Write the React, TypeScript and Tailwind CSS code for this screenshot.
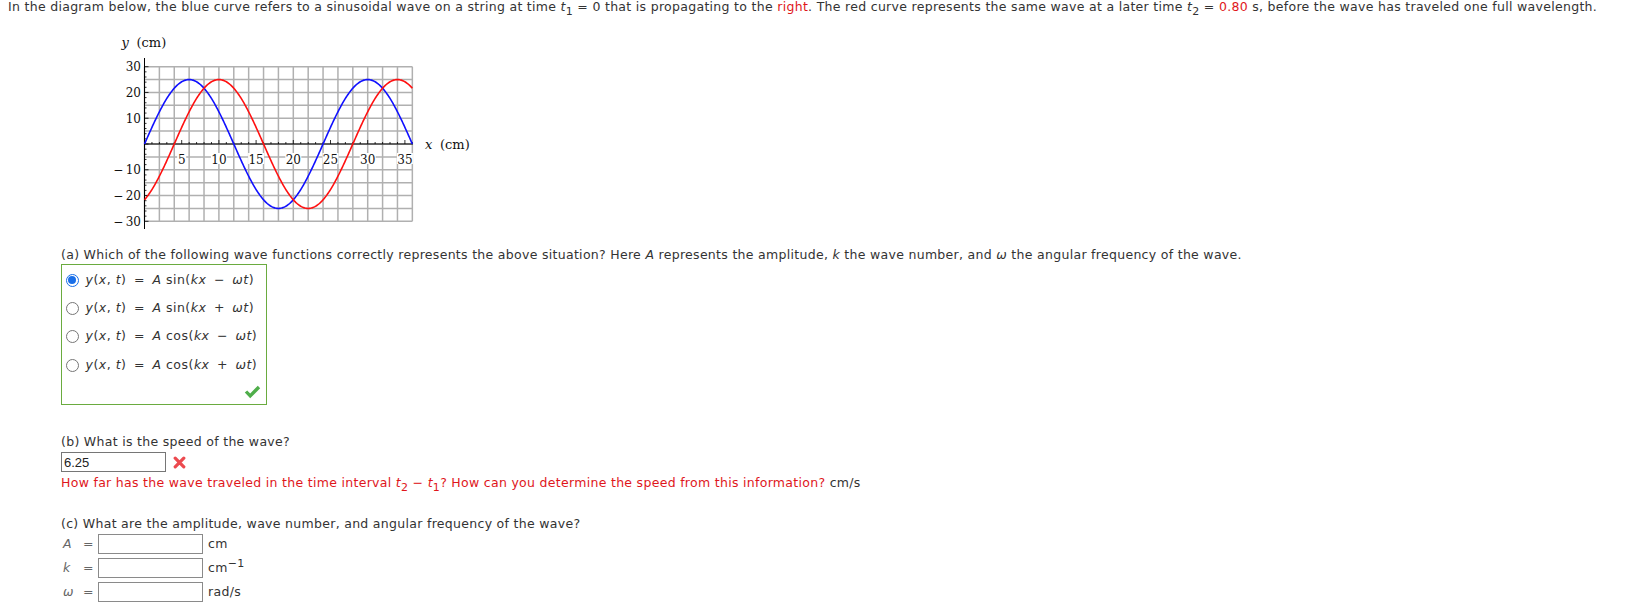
import React from "react";

const X = (u: number) => 144.5 + u * 7.44;
const Y = (v: number) => 143 - v * 2.577;

const wavePoints = (shift: number) => {
  const pts: string[] = [];
  for (let i = 0; i <= 360; i++) {
    const u = i / 10;
    const v = 25 * Math.sin((2 * Math.PI * (u - shift)) / 24);
    pts.push(`${X(u).toFixed(2)},${Y(v).toFixed(2)}`);
  }
  return pts.join(" ");
};

const WaveGraph = () => {
  const cols = Array.from({ length: 19 }, (_, i) => i * 2);
  const rows = Array.from({ length: 13 }, (_, i) => -30 + i * 5);
  const xLabels = [5, 10, 15, 20, 25, 30, 35];
  const yLabels = [30, 20, 10, -10, -20, -30];
  const xTicks = Array.from({ length: 36 }, (_, i) => i + 1);
  const yTicks = Array.from({ length: 31 }, (_, i) => -30 + i * 2);

  return (
    <svg width={380} height={200} viewBox="100 30 380 200" className="ml-[92px] mt-[17px] block tracking-normal">
      {cols.map((u) => (
        <line key={"c" + u} x1={X(u)} x2={X(u)} y1={Y(30)} y2={Y(-30)} stroke="#b0b0b0" strokeWidth={1.5} />
      ))}
      {rows.map((v) => (
        <line key={"r" + v} x1={X(0)} x2={X(36)} y1={Y(v)} y2={Y(v)} stroke="#b0b0b0" strokeWidth={1.5} />
      ))}

      {/* axes */}
      <line x1={144.5} x2={144.5} y1={57} y2={228} stroke="#000" strokeWidth={1} />
      <line x1={144.5} x2={413} y1={143} y2={143} stroke="#000" strokeWidth={1} />
      {yTicks.map((v) => (
        <line key={"yt" + v} x1={144.5} x2={v % 10 === 0 ? 148.5 : 146.5} y1={Y(v)} y2={Y(v)} stroke="#000" strokeWidth={0.8} />
      ))}
      {xTicks.map((u) => (
        <line key={"xt" + u} x1={X(u)} x2={X(u)} y1={143} y2={u % 5 === 0 ? 139 : 141} stroke="#000" strokeWidth={0.8} />
      ))}

      {/* waves */}
      <polyline points={wavePoints(0)} fill="none" stroke="#1010ff" strokeWidth={1.6} />
      <polyline points={wavePoints(4)} fill="none" stroke="#ff1010" strokeWidth={1.6} />

      {/* labels */}
      <g fontFamily="DejaVu Serif, serif" fontSize={12} fill="#111">
        {xLabels.map((u) => (
          <g key={"xl" + u}>
            <rect x={X(u) - (u < 10 ? 4.5 : 8)} y={152} width={u < 10 ? 9 : 16} height={11} fill="#fff" />
            <text x={X(u)} y={162.5} textAnchor="middle">
              {u}
            </text>
          </g>
        ))}
        {yLabels.map((v) => (
          <text key={"yl" + v} x={141} y={Y(v) + 4.3} textAnchor="end">
            {v < 0 ? `\u2212\u2009${-v}` : v}
          </text>
        ))}
      </g>
      <g fontFamily="DejaVu Serif, serif" fontSize={13} fill="#111">
        <text x={121.5} y={45.5} fontStyle="italic">y</text>
        <text x={136.5} y={45.5}>(cm)</text>
        <text x={425} y={147.5} fontStyle="italic">x</text>
        <text x={440} y={147.5}>(cm)</text>
      </g>
    </svg>
  );
};

const Sub = ({ children }: { children: React.ReactNode }) => (
  <span className="relative top-[4px] text-[11px]">{children}</span>
);

const Radio = ({ checked }: { checked?: boolean }) =>
  checked ? (
    <span className="flex h-[13px] w-[13px] shrink-0 items-center justify-center rounded-full border-[1.5px] border-[#1a6fe8] bg-white">
      <span className="h-[8px] w-[8px] rounded-full bg-[#1a6fe8]" />
    </span>
  ) : (
    <span className="h-[13px] w-[13px] shrink-0 rounded-full border border-[#767676] bg-white" />
  );

const Formula = ({ fn, op }: { fn: string; op: string }) => (
  <span className="tracking-[0.5px]">
    <i>y</i>(<i>x</i>, <i>t</i>) <span className="mx-[3px]">=</span> <i>A</i> {fn}(<i>kx</i>{" "}
    <span className="mx-[3px]">{op}</span> <i>ωt</i>)
  </span>
);

const options = [
  { fn: "sin", op: "\u2212", checked: true },
  { fn: "sin", op: "+" },
  { fn: "cos", op: "\u2212" },
  { fn: "cos", op: "+" },
];

const InputRow = ({ label, unit }: { label: React.ReactNode; unit: React.ReactNode }) => (
  <div className="flex h-[24px] items-center">
    <span className="w-[22px] pl-[2px] italic text-[#666]">{label}</span>
    <span className="w-[14.5px] text-[#666]">=</span>
    <span className="h-[20px] w-[105px] border border-[#8a8a8a] bg-white" />
    <span className="ml-[5.5px]">{unit}</span>
  </div>
);

export default function App() {
  return (
    <div className="min-h-[607px] bg-white pl-[8px] font-['DejaVu_Sans',Verdana,sans-serif] text-[12.5px] tracking-[0.3px] text-[#333]">
      <p className="whitespace-nowrap pt-[1px] leading-[12px]">
        In the diagram below, the blue curve refers to a sinusoidal wave on a string at time <i>t</i>
        <Sub>1</Sub> = 0 that is propagating to the <span className="text-[#e0161b]">right</span>. The red curve
        represents the same wave at a later time <i>t</i>
        <Sub>2</Sub> = <span className="text-[#e0161b]">0.80</span> s, before the wave has traveled one full wavelength.
      </p>

      <WaveGraph />

      <div className="pl-[53px]">
        <p className="mt-[16px] whitespace-nowrap leading-[16px]">
          (a) Which of the following wave functions correctly represents the above situation? Here <i>A</i> represents
          the amplitude, <i>k</i> the wave number, and <i>ω</i> the angular frequency of the wave.
        </p>
        <div className="mt-[1px] w-[206px] border border-[#6aab3f] pt-[1px]">
          {options.map((o, i) => (
            <div key={i} className="flex h-[28.33px] items-center gap-[7px] pl-[3.5px]">
              <Radio checked={o.checked} />
              <Formula fn={o.fn} op={o.op} />
            </div>
          ))}
          <div className="flex h-[25px] items-center justify-end pr-[5px]">
            <svg width="17" height="14" viewBox="0 0 17 14">
              <path d="M0.8 7.6 L3.2 5.4 L6.2 8.4 L13.8 0.8 L16.2 3.2 L6.2 13.2 Z" fill="#4fae4a" />
            </svg>
          </div>
        </div>

        <p className="mt-[29px] leading-[16px]">(b) What is the speed of the wave?</p>
        <div className="mt-[2px] flex h-[20px] items-center">
          <input
            readOnly
            value="6.25"
            className="h-[20px] w-[105px] border border-[#767676] px-[2px] font-['Liberation_Sans',Arial,sans-serif] text-[13px] tracking-normal text-[#222] outline-none"
          />
          <svg width="13" height="13" viewBox="0 0 13 13" className="ml-[7px]">
            <path d="M2.2 2.2 L10.8 10.8 M10.8 2.2 L2.2 10.8" stroke="#ec4a4f" strokeWidth={3.2} strokeLinecap="round" />
          </svg>
        </div>
        <p className="mt-[3px] whitespace-nowrap leading-[16px] text-[#e0161b]">
          How far has the wave traveled in the time interval <i>t</i>
          <Sub>2</Sub> − <i>t</i>
          <Sub>1</Sub>? How can you determine the speed from this information?{" "}
          <span className="text-[#333]">cm/s</span>
        </p>

        <p className="mt-[24px] leading-[16px]">(c) What are the amplitude, wave number, and angular frequency of the wave?</p>
        <InputRow label="A" unit="cm" />
        <InputRow
          label="k"
          unit={
            <span>
              cm<span className="relative top-[-5px] text-[11px]">−1</span>
            </span>
          }
        />
        <InputRow label="ω" unit="rad/s" />
      </div>
    </div>
  );
}
